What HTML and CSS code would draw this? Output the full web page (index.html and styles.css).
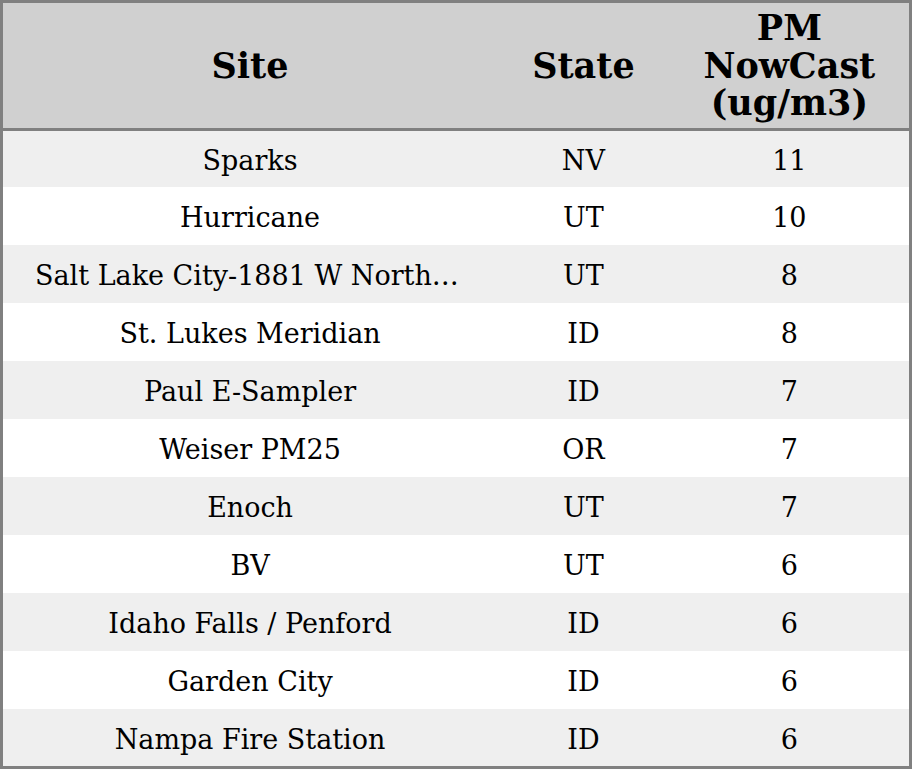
FILE: index.html
```html
<!DOCTYPE html>
<html>
<head>
<meta charset="utf-8">
<link rel="stylesheet" href="styles.css">
</head>
<body>
<table class="grid">
  <colgroup>
    <col class="c-site">
    <col class="c-state">
    <col class="c-pm">
  </colgroup>
  <thead>
    <tr>
      <th>Site</th>
      <th>State</th>
      <th>PM<br>NowCast<br>(ug/m3)</th>
    </tr>
  </thead>
  <tbody>
    <tr class="odd first"><td><div class="trunc">Sparks</div></td><td>NV</td><td>11</td></tr>
    <tr><td><div class="trunc">Hurricane</div></td><td>UT</td><td>10</td></tr>
    <tr class="odd"><td><div class="trunc">Salt Lake City-1881 W North Temple</div></td><td>UT</td><td>8</td></tr>
    <tr><td><div class="trunc">St. Lukes Meridian</div></td><td>ID</td><td>8</td></tr>
    <tr class="odd"><td><div class="trunc">Paul E-Sampler</div></td><td>ID</td><td>7</td></tr>
    <tr><td><div class="trunc">Weiser PM25</div></td><td>OR</td><td>7</td></tr>
    <tr class="odd"><td><div class="trunc">Enoch</div></td><td>UT</td><td>7</td></tr>
    <tr><td><div class="trunc">BV</div></td><td>UT</td><td>6</td></tr>
    <tr class="odd"><td><div class="trunc">Idaho Falls / Penford</div></td><td>ID</td><td>6</td></tr>
    <tr><td><div class="trunc">Garden City</div></td><td>ID</td><td>6</td></tr>
    <tr class="odd last"><td><div class="trunc">Nampa Fire Station</div></td><td>ID</td><td>6</td></tr>
  </tbody>
</table>
</body>
</html>
```
FILE: styles.css
```css
html, body {
  margin: 0;
  padding: 0;
  background: #ffffff;
}
.grid {
  width: 912px;
  height: 769px;
  border-collapse: collapse;
  table-layout: fixed;
  border: 3px solid #808080;
  font-family: "DejaVu Serif", serif;
  color: #000;
}
.c-site { width: 494px; }
.c-state { width: 172px; }
.c-pm { width: 240px; }
th {
  background: #d0d0d0;
  font-size: 35px;
  font-weight: bold;
  line-height: 37.5px;
  height: 125px;
  padding: 0;
  text-align: center;
  vertical-align: middle;
  border-bottom: 3px solid #808080;
}
td {
  font-size: 27px;
  padding: 3px 0 0;
  text-align: center;
  vertical-align: middle;
  height: 55px;
  background: #ffffff;
}
tr.first td { height: 53px; }
tr.last td { height: 54px; }
tr.odd td {
  background: #efefef;
}
.trunc {
  padding: 0 32px;
  white-space: nowrap;
  overflow: hidden;
  text-overflow: ellipsis;
}
```
